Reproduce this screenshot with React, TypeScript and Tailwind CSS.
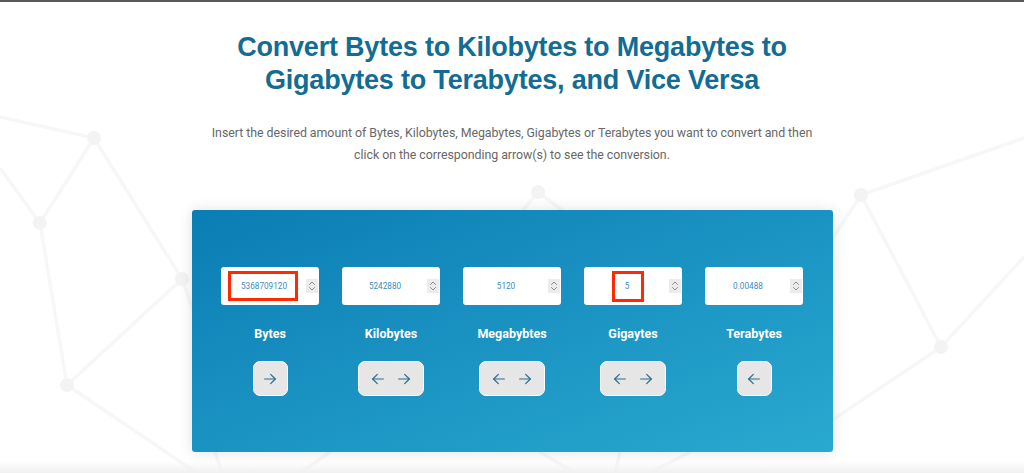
import React from "react";

const ArrowR = () => (
  <svg width="16" height="16" viewBox="0 0 24 24" fill="none" stroke="#2b6b8f" strokeWidth="1.8" strokeLinecap="round" strokeLinejoin="round">
    <path d="M4 12h16" />
    <path d="m13 5 7 7-7 7" />
  </svg>
);
const ArrowL = () => (
  <svg width="16" height="16" viewBox="0 0 24 24" fill="none" stroke="#2b6b8f" strokeWidth="1.8" strokeLinecap="round" strokeLinejoin="round">
    <path d="M20 12H4" />
    <path d="m11 19-7-7 7-7" />
  </svg>
);

const Spinner = () => (
  <div className="mr-[1px] flex h-[14px] w-[12px] shrink-0 items-center justify-center bg-[#ececec]">
    <svg width="8" height="12" viewBox="0 0 8 12" fill="none" stroke="#8c8c8c" strokeWidth="1" strokeLinecap="round" strokeLinejoin="round">
      <path d="M1.5 4.5 4 2l2.5 2.5" />
      <path d="M1.5 7.5 4 10l2.5-2.5" />
    </svg>
  </div>
);

type Col = {
  value: string;
  label: string;
  left: boolean;
  right: boolean;
  mark?: "bytes" | "giga";
};

const cols: Col[] = [
  { value: "5368709120", label: "Bytes", left: false, right: true, mark: "bytes" },
  { value: "5242880", label: "Kilobytes", left: true, right: true },
  { value: "5120", label: "Megabybtes", left: true, right: true },
  { value: "5", label: "Gigaytes", left: true, right: true, mark: "giga" },
  { value: "0.00488", label: "Terabytes", left: true, right: false },
];

const Column = ({ c }: { c: Col }) => {
  const both = c.left && c.right;
  return (
    <div className="flex w-[98px] flex-col items-center">
      <div className="relative flex h-[38px] w-full items-center rounded-[3px] bg-white">
        <span className="flex-1 pl-[1px] text-center text-[8.2px] leading-none text-[#3a8cbf]">{c.value}</span>
        <Spinner />
        {c.mark === "bytes" && (
          <div className="absolute left-[7px] top-[4px] h-[30px] w-[70px] border-[3px] border-[#ff2a00]" />
        )}
        {c.mark === "giga" && (
          <div className="absolute left-[28px] top-[4px] h-[31px] w-[32px] border-[3px] border-[#ff2a00]" />
        )}
      </div>
      <div className="mt-[21px] text-[12.5px] font-bold leading-[16px] text-white">{c.label}</div>
      <div
        className={
          both
            ? "mt-[19px] flex h-[35px] w-[66px] items-center justify-center gap-[10px] rounded-[7px] border-[1.5px] border-white bg-[#e6e6e6]"
            : "mt-[19px] flex h-[35px] w-[35px] items-center justify-center rounded-[7px] border-[1.5px] border-white bg-[#e6e6e6]"
        }
      >
        {c.left && <ArrowL />}
        {c.right && <ArrowR />}
      </div>
    </div>
  );
};

const lines: [number, number, number, number][] = [
  [0, 117, 94, 138],
  [94, 138, 40, 223],
  [94, 138, 182, 279],
  [0, 168, 40, 223],
  [40, 223, 67, 385],
  [182, 279, 67, 385],
  [67, 385, 200, 475],
  [182, 279, 200, 330],
  [538, 192, 515, 220],
  [538, 192, 575, 220],
  [215, 452, 222, 473],
  [300, 473, 330, 452],
  [540, 452, 575, 473],
  [615, 473, 620, 452],
  [650, 473, 690, 452],
  [861, 195, 1024, 138],
  [861, 195, 941, 347],
  [861, 195, 825, 250],
  [941, 347, 1024, 257],
  [941, 347, 825, 425],
];
const nodes: [number, number][] = [
  [94, 138],
  [40, 223],
  [182, 279],
  [67, 385],
  [538, 192],
  [861, 195],
  [941, 347],
];

export default function App() {
  return (
    <div className="relative h-[473px] w-full overflow-hidden bg-white" style={{ fontFamily: "Roboto, 'Open Sans', sans-serif" }}>
      <svg className="absolute inset-0" width="1024" height="473" viewBox="0 0 1024 473">
        {lines.map((l, i) => (
          <line key={i} x1={l[0]} y1={l[1]} x2={l[2]} y2={l[3]} stroke="#f7f7f7" strokeWidth="3.5" />
        ))}
        {nodes.map((n, i) => (
          <circle key={i} cx={n[0]} cy={n[1]} r="7" fill="#f3f3f3" />
        ))}
      </svg>
      <div className="absolute inset-x-0 bottom-0 h-[12px] bg-linear-to-b from-white/0 to-[#f0f0f0]" />
      <div className="relative flex flex-col items-center">
        <div className="h-[2px] w-full bg-[#5a5a5a]" />
        <h1
          className="mt-[29px] text-center text-[27px] font-bold leading-[33px] tracking-[-0.2px] text-[#136c92]"
          style={{ fontFamily: "'Liberation Sans', Arial, sans-serif" }}
        >
          Convert Bytes to Kilobytes to Megabytes to
          <br />
          Gigabytes to Terabytes, and Vice Versa
        </h1>
        <p className="mt-[25px] text-center text-[12.4px] leading-[22px] tracking-[-0.05px] text-[#686868]">
          Insert the desired amount of Bytes, Kilobytes, Megabytes, Gigabytes or Terabytes you want to convert and then
          <br />
          click on the corresponding arrow(s) to see the conversion.
        </p>
        <div className="mt-[44px] flex h-[242px] w-[641px] justify-center rounded-[3px] bg-linear-to-br from-[#0a7db4] to-[#29a9d0] pt-[57px] shadow-[0_0_14px_rgba(0,0,0,0.12)]">
          <div className="flex gap-[23px]">
            {cols.map((c) => (
              <Column key={c.label} c={c} />
            ))}
          </div>
        </div>
      </div>
    </div>
  );
}
